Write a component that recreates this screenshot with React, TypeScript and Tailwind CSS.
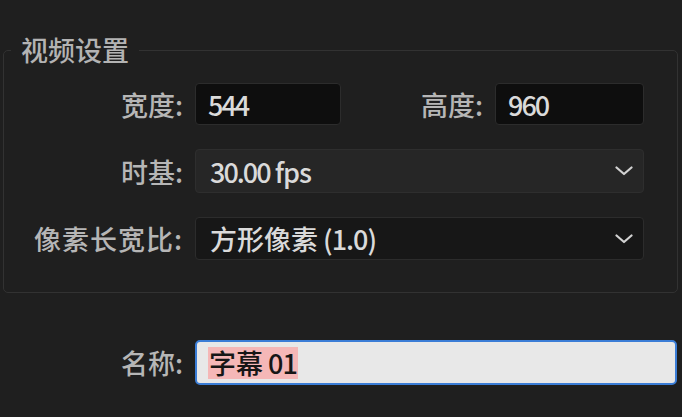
import React from "react";

function Chevron() {
  return (
    <svg width="18" height="10" viewBox="0 0 18 10" className="shrink-0">
      <polyline points="1.5,1.5 9,8 16.5,1.5" fill="none" stroke="#d2d2d2" strokeWidth="2.2" strokeLinecap="round" strokeLinejoin="round" />
    </svg>
  );
}

function L({ children }: { children: React.ReactNode }) {
  return <span className="tracking-[-1px]">{children}</span>;
}

function N({ children }: { children: React.ReactNode }) {
  return <span className="tracking-[-2px]">{children}</span>;
}

export default function App() {
  return (
    <div className="w-[682px] h-[417px] bg-[#1f1f1f] pt-[36px] pl-[3px] font-['Noto_Sans_CJK_SC','Noto_Sans',sans-serif] font-medium text-[27px] overflow-hidden">
      <fieldset className="w-[675px] border border-[#323232] rounded-[5px] pb-[32px] pr-[33px]">
        <legend className="ml-[7px] px-[10px] leading-[28px] text-[#b3b3b3]">视频设置</legend>
        <div className="flex flex-col gap-[24px] pt-[19px]">
          <div className="flex items-center">
            <div className="w-[179px] text-right text-[#b6b6b6] leading-none">宽度:</div>
            <div className="ml-[12px] w-[146px] h-[42px] rounded-[4px] border border-[#2c2c2c] bg-[#0e0e0e] flex items-center pl-[12px] text-[#dadada] leading-none"><N>544</N></div>
            <div className="ml-auto text-[#b6b6b6] leading-none">高度:</div>
            <div className="ml-[12px] w-[149px] h-[42px] rounded-[4px] border border-[#2c2c2c] bg-[#0e0e0e] flex items-center pl-[12px] text-[#dadada] leading-none"><N>960</N></div>
          </div>
          <div className="flex items-center">
            <div className="w-[179px] text-right text-[#b6b6b6] leading-none">时基:</div>
            <div className="ml-[12px] flex-1 h-[44px] rounded-[4px] border border-[#2e2e2e] bg-[#262626] flex items-center justify-between pl-[14px] pr-[10px] text-[#dadada] leading-none">
              <span className="whitespace-pre"><N>30.00</N><L> fps</L></span>
              <Chevron />
            </div>
          </div>
          <div className="flex items-center">
            <div className="w-[179px] text-right text-[#b6b6b6] leading-none tracking-[1px]">像素长宽比:</div>
            <div className="ml-[12px] flex-1 h-[43px] rounded-[4px] border border-[#2c2c2c] bg-[#171717] flex items-center justify-between pl-[14px] pr-[10px] text-[#dadada] leading-none">
              <span>方形像素<L> (1.0)</L></span>
              <Chevron />
            </div>
          </div>
        </div>
      </fieldset>
      <div className="flex items-center mt-[47px]">
        <div className="w-[180px] text-right text-[#b6b6b6] leading-none">名称:</div>
        <div className="ml-[12px] w-[482px] h-[45px] rounded-[5px] border-2 border-[#3b7dd6] bg-[#e8e8e8] flex items-center pl-[11px]">
          <span className="bg-[#f5b7b7] text-[#161616] leading-[32px] px-[1px]">字幕<L> 01</L></span>
        </div>
      </div>
    </div>
  );
}
